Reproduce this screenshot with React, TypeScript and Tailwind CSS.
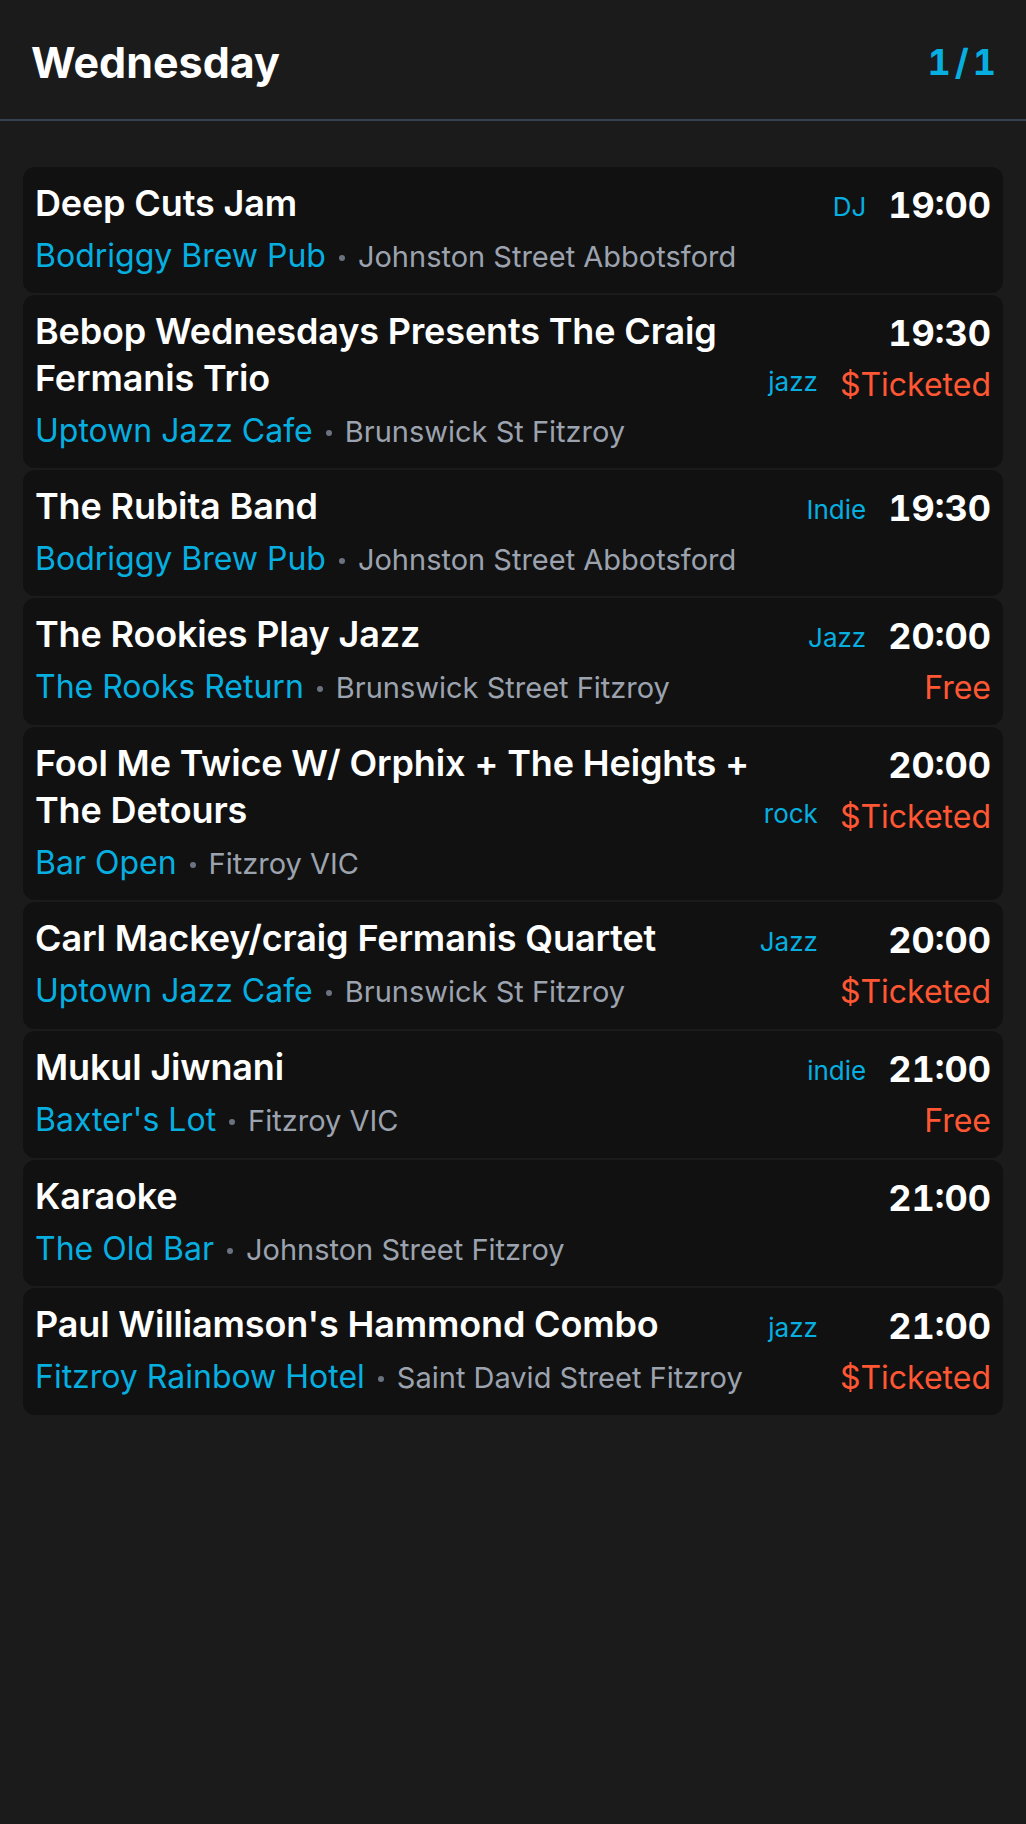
import React from 'react';

type Gig = {
    title: string;
    venue: string;
    address: string;
    genre?: string;
    time: string;
    price?: string;
};

const gigs: Gig[] = [
    { title: 'Deep Cuts Jam', venue: 'Bodriggy Brew Pub', address: 'Johnston Street Abbotsford', genre: 'DJ', time: '19:00' },
    { title: 'Bebop Wednesdays Presents The Craig Fermanis Trio', venue: 'Uptown Jazz Cafe', address: 'Brunswick St Fitzroy', genre: 'jazz', time: '19:30', price: '$Ticketed' },
    { title: 'The Rubita Band', venue: 'Bodriggy Brew Pub', address: 'Johnston Street Abbotsford', genre: 'Indie', time: '19:30' },
    { title: 'The Rookies Play Jazz', venue: 'The Rooks Return', address: 'Brunswick Street Fitzroy', genre: 'Jazz', time: '20:00', price: 'Free' },
    { title: 'Fool Me Twice W/ Orphix + The Heights + The Detours', venue: 'Bar Open', address: 'Fitzroy VIC', genre: 'rock', time: '20:00', price: '$Ticketed' },
    { title: 'Carl Mackey/craig Fermanis Quartet', venue: 'Uptown Jazz Cafe', address: 'Brunswick St Fitzroy', genre: 'Jazz', time: '20:00', price: '$Ticketed' },
    { title: 'Mukul Jiwnani', venue: "Baxter's Lot", address: 'Fitzroy VIC', genre: 'indie', time: '21:00', price: 'Free' },
    { title: 'Karaoke', venue: 'The Old Bar', address: 'Johnston Street Fitzroy', time: '21:00' },
    { title: "Paul Williamson's Hammond Combo", venue: 'Fitzroy Rainbow Hotel', address: 'Saint David Street Fitzroy', genre: 'jazz', time: '21:00', price: '$Ticketed' },
];

function GigCard({ gig }: { gig: Gig }) {
    return (
        <div className="flex gap-[22px] rounded-xl bg-[#111111] pl-[12px] pr-[12px] pt-[13px] pb-[12px]">
            {/* left: title + venue */}
            <div className="min-w-0 flex-1">
                <div className="flex gap-[4px] [align-items:last_baseline]">
                    <h3 className="min-w-0 flex-1 text-[36px] font-semibold leading-[47px] tracking-[-0.15px] text-white">
                        {gig.title}
                    </h3>
                    {gig.genre && (
                        <span className="shrink-0 text-[26px] leading-[36px] text-[#06afe0]">{gig.genre}</span>
                    )}
                </div>
                <div className="mt-[5px] text-[32px] leading-[48px] whitespace-nowrap">
                    <span className="text-[#06afe0]">{gig.venue}</span>
                    <span className="mx-[13px] inline-block h-[6px] w-[6px] rounded-full bg-[#6b7280] align-middle"></span>
                    <span className="text-[29px] text-[#9ca3af]">{gig.address}</span>
                </div>
            </div>

            {/* right: time + price */}
            <div className="flex shrink-0 flex-col items-end">
                <span className="text-[36px] font-bold leading-[50px] tabular-nums text-white">{gig.time}</span>
                {gig.price && (
                    <span className="mt-[2px] text-[32px] leading-[50px] text-[#ff5733]">{gig.price}</span>
                )}
            </div>
        </div>
    );
}

export default function App() {
    return (
        <div className="min-h-screen w-full bg-[#1b1b1b] font-['Inter','Noto_Sans',sans-serif]">
            <header className="flex h-[121px] items-center justify-between border-b-2 border-[#374151] pl-[31px] pr-[26px] pt-[4px]">
                <h1 className="text-[43px] font-bold leading-[52px] text-white">Wednesday</h1>
                <span className="text-[36px] font-bold leading-[44px] tracking-[4px] tabular-nums text-[#06afe0]">1/1</span>
            </header>

            <div className="flex flex-col gap-[2px] px-[23px] pt-[46px] pb-10">
                {gigs.map((gig, i) => (
                    <GigCard key={i} gig={gig} />
                ))}
            </div>
        </div>
    );
}
